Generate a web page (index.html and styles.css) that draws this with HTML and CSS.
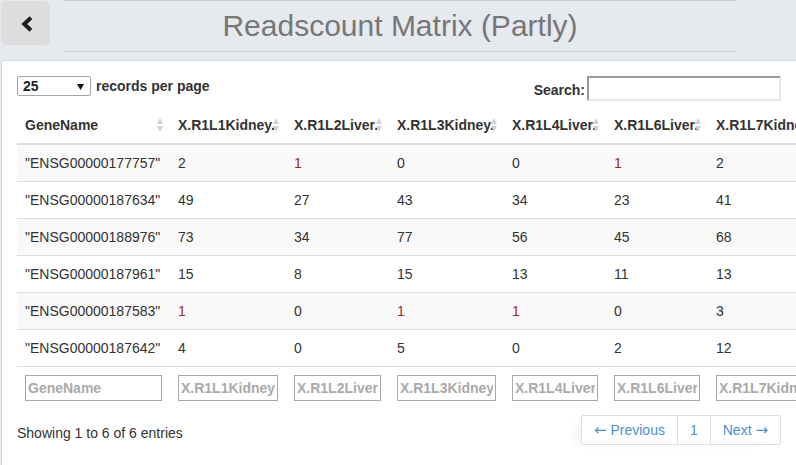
FILE: index.html
```html
<!DOCTYPE html>
<html>
<head>
<meta charset="utf-8">
<link rel="stylesheet" href="styles.css">
</head>
<body>
<div class="top">
  <a class="back" href="#"><svg width="12" height="16" viewBox="0 0 12 16"><polyline points="10,1.8 3.2,8 10,14.2" fill="none" stroke="#1e1e1e" stroke-width="4" stroke-linejoin="miter"/></svg></a>
  <div class="titlebar"><h1>Readscount Matrix (Partly)</h1></div>
</div>
<div class="panel">
  <div class="controls">
    <div class="length">
      <div class="select"><span>25</span><svg width="7" height="6" viewBox="0 0 7 6"><polygon points="0,0 7,0 3.5,6" fill="#111"/></svg></div>
      <span class="lbl">records per page</span>
    </div>
    <div class="filter"><label>Search:</label><input class="search" type="text"></div>
  </div>
  <table class="grid">
    <colgroup><col class="c0"><col class="c1"><col class="c2"><col class="c3"><col class="c4"><col class="c5"><col class="c6"></colgroup>
    <thead>
      <tr>
        <th>GeneName<i class="sort"></i></th>
        <th>X.R1L1Kidney.<i class="sort"></i></th>
        <th>X.R1L2Liver.<i class="sort"></i></th>
        <th>X.R1L3Kidney.<i class="sort"></i></th>
        <th>X.R1L4Liver.<i class="sort"></i></th>
        <th>X.R1L6Liver.<i class="sort"></i></th>
        <th>X.R1L7Kidney.<i class="sort"></i></th>
      </tr>
    </thead>
    <tbody>
      <tr><td>"ENSG00000177757"</td><td>2</td><td class="r">1</td><td>0</td><td>0</td><td class="r">1</td><td>2</td></tr>
      <tr><td>"ENSG00000187634"</td><td>49</td><td>27</td><td>43</td><td>34</td><td>23</td><td>41</td></tr>
      <tr><td>"ENSG00000188976"</td><td>73</td><td>34</td><td>77</td><td>56</td><td>45</td><td>68</td></tr>
      <tr><td>"ENSG00000187961"</td><td>15</td><td>8</td><td>15</td><td>13</td><td>11</td><td>13</td></tr>
      <tr><td>"ENSG00000187583"</td><td class="r">1</td><td>0</td><td class="r">1</td><td class="r">1</td><td>0</td><td>3</td></tr>
      <tr><td>"ENSG00000187642"</td><td>4</td><td>0</td><td>5</td><td>0</td><td>2</td><td>12</td></tr>
    </tbody>
    <tfoot>
      <tr>
        <td><input class="fin" placeholder="GeneName"></td>
        <td><input class="fin" placeholder="X.R1L1Kidney"></td>
        <td><input class="fin" placeholder="X.R1L2Liver"></td>
        <td><input class="fin" placeholder="X.R1L3Kidney"></td>
        <td><input class="fin" placeholder="X.R1L4Liver"></td>
        <td><input class="fin" placeholder="X.R1L6Liver"></td>
        <td><input class="fin" placeholder="X.R1L7Kidney"></td>
      </tr>
    </tfoot>
  </table>
  <div class="bottom">
    <div class="info">Showing 1 to 6 of 6 entries</div>
    <ul class="pagination">
      <li><a href="#"><span class="arr">←</span> Previous</a></li>
      <li><a href="#">1</a></li>
      <li><a href="#">Next <span class="arr">→</span></a></li>
    </ul>
  </div>
</div>
</body>
</html>
```
FILE: styles.css
```css
* { box-sizing: border-box; }
html, body { margin: 0; padding: 0; }
body {
  background: #e6e9ee;
  font-family: "Liberation Sans", Arial, sans-serif;
  font-size: 14px;
  line-height: 20px;
  color: #333;
  width: 796px;
  height: 465px;
  overflow: hidden;
}
.top {
  display: flex;
  align-items: flex-start;
  height: 52px;
}
.back {
  display: flex;
  align-items: center;
  justify-content: center;
  width: 49px;
  height: 44px;
  margin: 1px 0 0 1px;
  background: #dddddd;
  border-radius: 5px;
  padding-left: 3px;
  padding-top: 2px;
}
.titlebar {
  margin-left: 13px;
  width: 674px;
  height: 52px;
  border-top: 1px solid #c9ced6;
  border-bottom: 1px solid #c9ced6;
  display: flex;
  align-items: center;
  justify-content: center;
}
.titlebar h1 {
  margin: 0;
  font-weight: normal;
  font-size: 30px;
  line-height: 34px;
  color: #777;
  padding-bottom: 1px;
}
.panel {
  margin: 8px 0 0 1px;
  width: 795px;
  height: 405px;
  background: #fff;
  border-left: 1px solid #d6dbe1;
  border-top: 1px solid #d6dbe1;
  border-top-left-radius: 3px;
  padding: 15px 15px 0 15px;
  overflow: hidden;
}
.controls {
  display: flex;
  justify-content: space-between;
  align-items: flex-start;
  height: 25px;
}
.length {
  display: flex;
  align-items: center;
  height: 20px;
}
.select {
  width: 74px;
  height: 20px;
  border: 1px solid #a6a6a6;
  border-radius: 2px;
  display: flex;
  align-items: center;
  justify-content: space-between;
  padding: 0 6px 0 5px;
  font-weight: bold;
  color: #222;
}
.select svg { margin-top: 1px; }
.lbl {
  margin-left: 5px;
  font-weight: bold;
  color: #333;
}
.filter {
  display: flex;
  align-items: center;
  height: 25px;
}
.filter label {
  font-weight: bold;
  margin-top: 3px;
}
.search {
  margin-left: 2px;
  width: 194px;
  height: 25px;
  border-style: solid;
  border-width: 2px;
  border-color: #9a9a9a #e8e8e8 #e8e8e8 #9a9a9a;
  background: #fff;
  outline: none;
  padding: 0 2px;
}
.grid {
  margin-top: 6px;
  width: 807px;
  table-layout: fixed;
  border-collapse: collapse;
  border-spacing: 0;
}
.c0 { width: 153px; }
.c1 { width: 116px; }
.c2 { width: 103px; }
.c3 { width: 115px; }
.c4 { width: 102px; }
.c5 { width: 102px; }
.c6 { width: 116px; }
.grid th {
  position: relative;
  text-align: left;
  font-weight: bold;
  color: #333;
  padding: 8px;
  white-space: nowrap;
  overflow: visible;
  border-bottom: 2px solid #dddddd;
}
.sort {
  position: absolute;
  right: 6px;
  top: 11px;
  width: 7px;
  height: 14px;
}
.sort::before, .sort::after {
  content: "";
  position: absolute;
  left: 0;
  border-left: 3.5px solid transparent;
  border-right: 3.5px solid transparent;
}
.sort::before {
  top: 0;
  border-bottom: 6px solid #d2d2d2;
}
.sort::after {
  top: 8px;
  border-top: 6px solid #d2d2d2;
}
.grid td {
  padding: 8px;
  border-top: 1px solid #dddddd;
  white-space: nowrap;
  color: #333;
}
.grid tbody tr:nth-child(odd) td { background: #f9f9f9; }
.grid td.r { color: #a52a1f; }
.fin {
  display: block;
  width: 100%;
  height: 26px;
  border: 1px solid #a9a9a9;
  padding: 0 2px;
  font-family: "Liberation Sans", Arial, sans-serif;
  font-size: 14px;
  font-weight: bold;
  color: #333;
  outline: none;
}
.fin::placeholder { color: #aaaaaa; font-weight: bold; opacity: 1; }
.bottom {
  margin-top: 6px;
  display: flex;
  justify-content: space-between;
  align-items: flex-start;
}
.info { padding-top: 8px; }
.pagination {
  list-style: none;
  margin: 0;
  padding: 0;
  display: flex;
  box-shadow: -12px 4px 10px -6px rgba(0,0,0,0.05);
}
.pagination li a {
  display: block;
  padding: 4px 12px;
  line-height: 20px;
  border: 1px solid #dddddd;
  margin-left: -1px;
  color: #4b90d0;
  text-decoration: none;
  background: #fff;
}
.arr {
  font-family: "DejaVu Sans", sans-serif;
  font-size: 15px;
}
.pagination li:first-child a { margin-left: 0; border-radius: 2px 0 0 2px; }
.pagination li:last-child a { border-radius: 0 2px 2px 0; }
```
